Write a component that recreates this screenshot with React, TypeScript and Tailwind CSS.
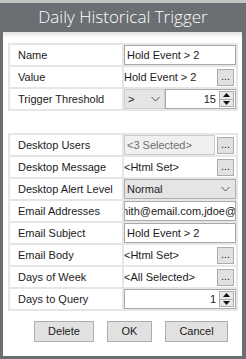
import React from 'react';

const Chevron = () => (
  <svg width="9" height="6" viewBox="0 0 9 6" className="shrink-0">
    <polyline points="0.5,1 4.5,5 8.5,1" fill="none" stroke="#555" strokeWidth="1" />
  </svg>
);

const Dots = () => (
  <div className="w-[17px] h-[17px] shrink-0 bg-[#e1e1e1] border border-[#adadad] flex items-end justify-center pb-[3px] text-[11px] leading-none text-[#1a1a1a]">
    ...
  </div>
);

const Spinner = () => (
  <div className="w-[15px] h-[16px] shrink-0 flex flex-col border border-[#adadad] bg-[#e8e8e8]">
    <div className="flex-1 flex items-center justify-center border-b border-[#adadad]">
      <svg width="7" height="4" viewBox="0 0 7 4">
        <polygon points="0,4 3.5,0 7,4" fill="#111" />
      </svg>
    </div>
    <div className="flex-1 flex items-center justify-center">
      <svg width="7" height="4" viewBox="0 0 7 4">
        <polygon points="0,0 3.5,4 7,0" fill="#111" />
      </svg>
    </div>
  </div>
);

const TextBox = ({ children, disabled }: { children: React.ReactNode; disabled?: boolean }) => (
  <div
    className={`h-full flex-1 min-w-0 overflow-hidden whitespace-nowrap flex items-center border pl-[2px] ${
      disabled ? 'bg-[#f0f0f0] border-[#cccccc] text-[#6d6d6d]' : 'bg-white border-[#a9a9a9]'
    }`}
  >
    {children}
  </div>
);

const PlainDots = ({ text }: { text: string }) => (
  <div className="h-full flex items-center justify-between pr-[2px]">
    <span className="whitespace-nowrap">{text}</span>
    <Dots />
  </div>
);

const NumberBox = ({ value }: { value: string }) => (
  <div className="h-full flex-1 flex items-center justify-end gap-[3px] bg-white border border-[#a9a9a9] pr-[1px]">
    <span>{value}</span>
    <Spinner />
  </div>
);

type Row = { label: string; value: React.ReactNode };

const Grid = ({ rows }: { rows: Row[] }) => (
  <div className="grid grid-cols-[112px_1fr] auto-rows-[20px] gap-[2px] p-[2px] bg-[#e6e6e6]">
    {rows.map((r) => (
      <React.Fragment key={r.label}>
        <div className="bg-white pl-[8px] flex items-center whitespace-nowrap">{r.label}</div>
        <div className="bg-white min-w-0">{r.value}</div>
      </React.Fragment>
    ))}
  </div>
);

export default function App() {
  const top: Row[] = [
    { label: 'Name', value: <TextBox>Hold Event &gt; 2</TextBox> },
    { label: 'Value', value: <PlainDots text="Hold Event > 2" /> },
    {
      label: 'Trigger Threshold',
      value: (
        <div className="h-full flex">
          <div className="w-[41px] h-full bg-[#e5e5e5] border border-[#cfcfcf] flex items-center justify-between pl-[3px] pr-[4px]">
            <span>&gt;</span>
            <Chevron />
          </div>
          <NumberBox value="15" />
        </div>
      ),
    },
  ];

  const bottom: Row[] = [
    {
      label: 'Desktop Users',
      value: (
        <div className="h-full flex gap-[2px] pr-[2px]">
          <TextBox disabled>&lt;3 Selected&gt;</TextBox>
          <div className="flex items-center">
            <Dots />
          </div>
        </div>
      ),
    },
    { label: 'Desktop Message', value: <PlainDots text="<Html Set>" /> },
    {
      label: 'Desktop Alert Level',
      value: (
        <div className="h-full bg-[#e5e5e5] border border-[#adadad] flex items-center justify-between pl-[2px] pr-[5px]">
          <span>Normal</span>
          <Chevron />
        </div>
      ),
    },
    {
      label: 'Email Addresses',
      value: (
        <TextBox>
          <span className="-ml-[8px]">mith@email.com,jdoe@email.com</span>
        </TextBox>
      ),
    },
    { label: 'Email Subject', value: <TextBox>Hold Event &gt; 2</TextBox> },
    { label: 'Email Body', value: <PlainDots text="<Html Set>" /> },
    { label: 'Days of Week', value: <PlainDots text="<All Selected>" /> },
    { label: 'Days to Query', value: <div className="h-full flex"><NumberBox value="1" /></div> },
  ];

  return (
    <div className="w-[246px] h-[359px] bg-[#6b6e73] border-t-[3px] border-[#c4c4c4] flex flex-col font-['Liberation_Sans',Arial,sans-serif] text-[11px] text-[#1b1b1b]">
      <div className="h-[29px] flex items-center justify-center text-white text-[17px] font-light font-['Open_Sans',sans-serif] pb-[1px]">
        Daily Historical Trigger
      </div>
      <div className="flex-1 ml-[3px] mr-[4px] mb-[3px] bg-white bg-gradient-to-b from-[#e2e2e2] to-white to-[6px] pt-[11px] pl-[5px] pr-[4px]">
        <Grid rows={top} />
        <div className="h-[22px]" />
        <Grid rows={bottom} />
        <div className="flex gap-[13px] pl-[26px] mt-[10px]">
          <button className="w-[60px] h-[21px] bg-[#e1e1e1] border border-[#adadad]">Delete</button>
          <button className="w-[45px] h-[21px] bg-[#e1e1e1] border border-[#adadad]">OK</button>
          <button className="w-[63px] h-[21px] bg-[#e1e1e1] border border-[#adadad]">Cancel</button>
        </div>
      </div>
    </div>
  );
}
